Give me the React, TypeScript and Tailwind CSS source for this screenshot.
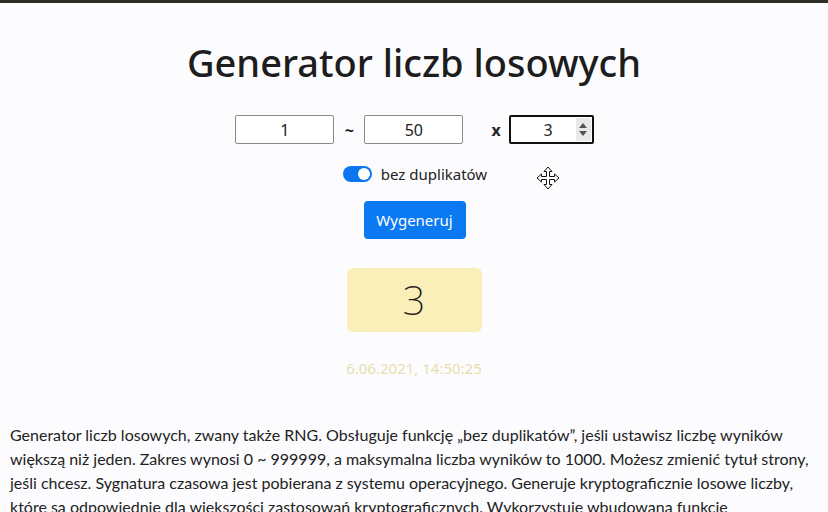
import { useState } from "react";

function MoveCursor() {
  return (
    <svg width="24" height="24" viewBox="0 0 24 24" className="block">
      <path
        d="M12 1 L16 5.5 L13.5 5.5 L13.5 10.5 L18.5 10.5 L18.5 8 L23 12 L18.5 16 L18.5 13.5 L13.5 13.5 L13.5 18.5 L16 18.5 L12 23 L8 18.5 L10.5 18.5 L10.5 13.5 L5.5 13.5 L5.5 16 L1 12 L5.5 8 L5.5 10.5 L10.5 10.5 L10.5 5.5 L8 5.5 Z"
        fill="#fff"
        stroke="#111"
        strokeWidth="1"
        strokeLinejoin="miter"
      />
    </svg>
  );
}

function NumberBox({ value, focused }: { value: string; focused?: boolean }) {
  return (
    <div
      className={
        focused
          ? "relative flex h-[29px] w-[85px] items-center justify-center rounded-[2px] border-2 border-[#111] bg-white text-[16px] text-[#222]"
          : "flex h-[29px] w-[99px] items-center justify-center rounded-[2px] border border-[#8a8a8a] bg-white text-[16px] text-[#222]"
      }
    >
      <span className={focused ? "-ml-[6px]" : ""}>{value}</span>
      {focused && (
        <div className="absolute right-[1px] top-[1px] flex h-[23px] w-[15px] flex-col items-center justify-center gap-[3px] bg-[#e9e9e9]">
          <svg width="8" height="5" viewBox="0 0 8 5">
            <path d="M0 5 L4 0 L8 5 Z" fill="#555" />
          </svg>
          <svg width="8" height="5" viewBox="0 0 8 5">
            <path d="M0 0 L4 5 L8 0 Z" fill="#555" />
          </svg>
        </div>
      )}
    </div>
  );
}

const about = [
  "Generator liczb losowych, zwany także RNG. Obsługuje funkcję „bez duplikatów”, jeśli ustawisz liczbę wyników",
  "większą niż jeden. Zakres wynosi 0 ~ 999999, a maksymalna liczba wyników to 1000. Możesz zmienić tytuł strony,",
  "jeśli chcesz. Sygnatura czasowa jest pobierana z systemu operacyjnego. Generuje kryptograficznie losowe liczby,",
  "które są odpowiednie dla większości zastosowań kryptograficznych. Wykorzystuje wbudowaną funkcję",
];

export default function App() {
  const [unique, setUnique] = useState(true);

  return (
    <div className="h-[512px] w-full overflow-hidden bg-[#fcfcfe] font-['Noto_Sans','Open_Sans',sans-serif] text-[#222]">
      <div className="h-[3px] w-full bg-[#2d2d22]" />

      <h1 className="mt-[33px] text-center text-[38px] font-medium leading-[52px] text-[#1d1d1d]">
        Generator liczb losowych
      </h1>

      <div className="mt-[27px] flex items-center justify-center">
        <div className="ml-[1px] flex items-center">
          <NumberBox value="1" />
          <span className="w-[30px] text-center text-[16px] font-bold">~</span>
          <NumberBox value="50" />
          <span className="ml-[28px] mr-[8px] text-[16px] font-bold">x</span>
          <NumberBox value="3" focused />
        </div>
      </div>

      <div className="mt-[20px] flex justify-center">
        <div className="relative ml-[2px] flex items-center gap-[9px]">
          <button
            onClick={() => setUnique(!unique)}
            className="flex h-[16px] w-[29px] items-center justify-end rounded-full bg-[#0b76ef] px-[2px]"
          >
            <span className="h-[12px] w-[12px] rounded-full bg-white" />
          </button>
          <span className="text-[15px] leading-[20px] text-[#222]">bez duplikatów</span>
          <div className="absolute left-[193px] top-[2px]">
            <MoveCursor />
          </div>
        </div>
      </div>

      <div className="mt-[17px] flex justify-center">
        <button className="ml-[1px] h-[38px] w-[102px] rounded-[4px] bg-[#0b79f2] text-[15px] text-white">
          Wygeneruj
        </button>
      </div>

      <div className="mt-[29px] flex justify-center">
        <div className="flex h-[64px] w-[135px] items-center justify-center rounded-[6px] bg-[#faefb8] text-[40px] font-extralight text-[#222]">
          3
        </div>
      </div>

      <p className="mt-[25px] text-center text-[15px] text-[#e8deb0]">6.06.2021, 14:50:25</p>

      <div className="mt-[43px] px-[10px] font-['Lato','Noto_Sans',sans-serif] text-[16px] leading-[24px] text-[#222]">
        {about.map((line) => (
          <div key={line} className="whitespace-nowrap">
            {line}
          </div>
        ))}
      </div>
    </div>
  );
}
